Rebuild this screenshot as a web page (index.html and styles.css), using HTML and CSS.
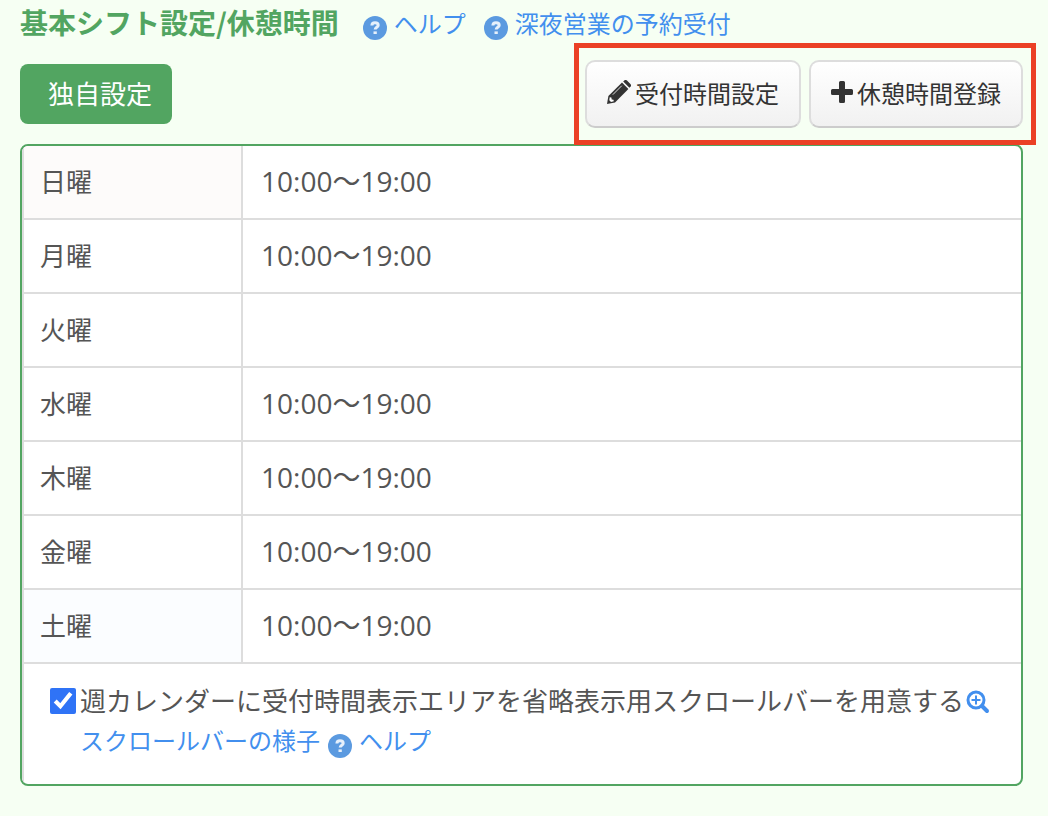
FILE: index.html
```
<!DOCTYPE html>
<html lang="ja">
<head>
    <meta charset="UTF-8">
    <meta name="viewport" content="width=device-width, initial-scale=1.0">
    <title>基本シフト設定/休憩時間</title>
    <link rel="stylesheet" href="styles.css">
</head>
<body>
    <svg class="defs" width="0" height="0" aria-hidden="true">
        <symbol id="help" viewBox="0 0 24 24">
            <circle cx="12" cy="12" r="12" fill="#5b9ae0"/>
            <path d="M8.900 9.600C8.900 7.600 10.200 6.700 12 6.700s3.200 1 3.200 2.600c0 2-3 2-3 4.200" fill="none" stroke="#e6f0fb" stroke-width="3"/>
            <rect x="10.500" y="15.400" width="3.300" height="2.600" fill="#e6f0fb"/>
        </symbol>
    </svg>

    <header class="header">
        <h1>基本シフト設定/休憩時間</h1>
        <a class="help" href="#"><svg class="help-icon"><use href="#help"/></svg>ヘルプ</a>
        <a class="help" href="#"><svg class="help-icon"><use href="#help"/></svg>深夜営業の予約受付</a>
    </header>

    <div class="toolbar">
        <button type="button" class="btn-own">独自設定</button>
        <div class="actions">
            <button type="button" class="btn">
                <svg width="24" height="24" viewBox="0 0 24 24" aria-hidden="true">
                    <path d="M0 24l1.400-8L15 2.600 21.400 9 8 22.600z" fill="#333"/>
                    <path d="M16.200 1.500L17.200.6a2 2 0 0 1 2.800 0L23.400 4a2 2 0 0 1 0 2.800l-1 1z" fill="#333"/>
                    <path d="M2.700 17.300l1.700.3.300 1.800 1.800.3.300 1.600-2.800.6-1.700-1.700z" fill="#fff"/>
                    <path d="M5.800 14.700L14.800 5.700" stroke="#ddd" stroke-width="1"/>
                </svg>受付時間設定
            </button>
            <button type="button" class="btn">
                <svg width="22" height="22" viewBox="0 0 22 22" aria-hidden="true">
                    <path d="M9.500 0h3a1.500 1.500 0 0 1 1.500 1.500V8h6.500A1.500 1.500 0 0 1 22 9.500v3a1.500 1.500 0 0 1-1.500 1.500H14v6.500a1.500 1.500 0 0 1-1.500 1.500h-3A1.500 1.500 0 0 1 8 20.500V14H1.500A1.500 1.500 0 0 1 0 12.500v-3A1.500 1.500 0 0 1 1.500 8H8V1.500A1.500 1.500 0 0 1 9.500 0z" fill="#333"/>
                </svg>休憩時間登録
            </button>
        </div>
    </div>

    <main class="panel">
        <table class="shift">
            <tr class="sun"><th scope="row">日曜</th><td>10:00～19:00</td></tr>
            <tr><th scope="row">月曜</th><td>10:00～19:00</td></tr>
            <tr><th scope="row">火曜</th><td></td></tr>
            <tr><th scope="row">水曜</th><td>10:00～19:00</td></tr>
            <tr><th scope="row">木曜</th><td>10:00～19:00</td></tr>
            <tr><th scope="row">金曜</th><td>10:00～19:00</td></tr>
            <tr class="sat"><th scope="row">土曜</th><td>10:00～19:00</td></tr>
        </table>
        <div class="option">
            <input type="checkbox" id="scrollbar" checked>
            <div>
                <div class="option-row">
                    <label for="scrollbar">週カレンダーに受付時間表示エリアを省略表示用スクロールバーを用意する</label>
                    <a class="zoom" href="#" aria-label="拡大">
                        <svg width="24" height="24" viewBox="0 0 24 24" fill="none" stroke="#428fee">
                            <circle cx="10" cy="10" r="8" stroke-width="3"/>
                            <path d="M16 16l5 5" stroke-width="4" stroke-linecap="round"/>
                            <path d="M10 5.500v9M5.500 10h9" stroke-width="2"/>
                        </svg>
                    </a>
                </div>
                <div class="option-row links">
                    <a href="#">スクロールバーの様子</a>
                    <a class="help" href="#"><svg class="help-icon"><use href="#help"/></svg>ヘルプ</a>
                </div>
            </div>
        </div>
    </main>
</body>
</html>
```
FILE: styles.css
```
* {
    box-sizing: border-box;
}
body {
    margin: 0;
    padding: 0 25px 30px 20px;
    background: #f6fff3;
    color: #555;
    font-family: "Noto Sans CJK JP", sans-serif;
    font-size: 26px;
}
a {
    color: #428fee;
    font-size: 24px;
    text-decoration: none;
}
.defs {
    position: absolute;
}
.header {
    display: flex;
    align-items: center;
    gap: 18px;
    height: 60px;
    padding-bottom: 16px;
}
h1 {
    margin: 0 6px 0 0;
    color: #52a561;
    font-size: 28px;
    font-weight: bold;
}
.help {
    display: flex;
    align-items: center;
    gap: 7px;
}
.help-icon {
    width: 24px;
    height: 24px;
    margin-top: 12px;
}
.toolbar {
    display: flex;
    justify-content: space-between;
    align-items: center;
    margin-bottom: 16px;
}
button {
    font-family: inherit;
    cursor: pointer;
}
.btn-own {
    height: 60px;
    padding: 0 20px 4px 28px;
    border: 0;
    border-radius: 8px;
    background: #52a561;
    color: #fff;
    font-size: 26px;
}
.actions {
    position: relative;
    display: flex;
    gap: 8px;
}
.actions::after {
    content: "";
    position: absolute;
    inset: -17px -13px -17px -11px;
    border: 5px solid #eb4025;
    pointer-events: none;
}
.btn {
    display: flex;
    align-items: center;
    gap: 4px;
    height: 68px;
    padding: 0 20px 4px;
    border: 2px solid #ddd;
    border-bottom-color: #ccc;
    border-radius: 10px;
    background: linear-gradient(#fff, #f1f1f1);
    color: #333;
    font-size: 24px;
}
.panel {
    border: 2px solid #52a561;
    border-radius: 8px;
    background: #fff;
    overflow: hidden;
}
.shift {
    width: 100%;
    border-spacing: 0;
    border-left: 2px solid #ddd;
}
.shift th,
.shift td {
    height: 74px;
    padding: 0 18px 4px;
    border-bottom: 2px solid #ddd;
    text-align: left;
    font-weight: normal;
}
.shift th {
    width: 219px;
    padding-left: 16px;
    border-right: 2px solid #ddd;
}
.shift td {
    font-family: "Open Sans", "Noto Sans CJK JP", sans-serif;
    font-size: 28px;
}
.sun th {
    background: #fdfbfa;
}
.sat th {
    background: #fbfdff;
}
.option {
    display: flex;
    gap: 4px;
    padding: 16px 18px 24px 26px;
    border-left: 2px solid #ddd;
}
.option input {
    flex: none;
    width: 26px;
    height: 26px;
    margin: 8px 0 0;
    accent-color: #2f73f6;
}
.option-row {
    display: flex;
    align-items: center;
    gap: 2px;
    line-height: 40px;
}
.zoom {
    display: flex;
    padding-top: 4px;
}
.links {
    gap: 8px;
}
```
